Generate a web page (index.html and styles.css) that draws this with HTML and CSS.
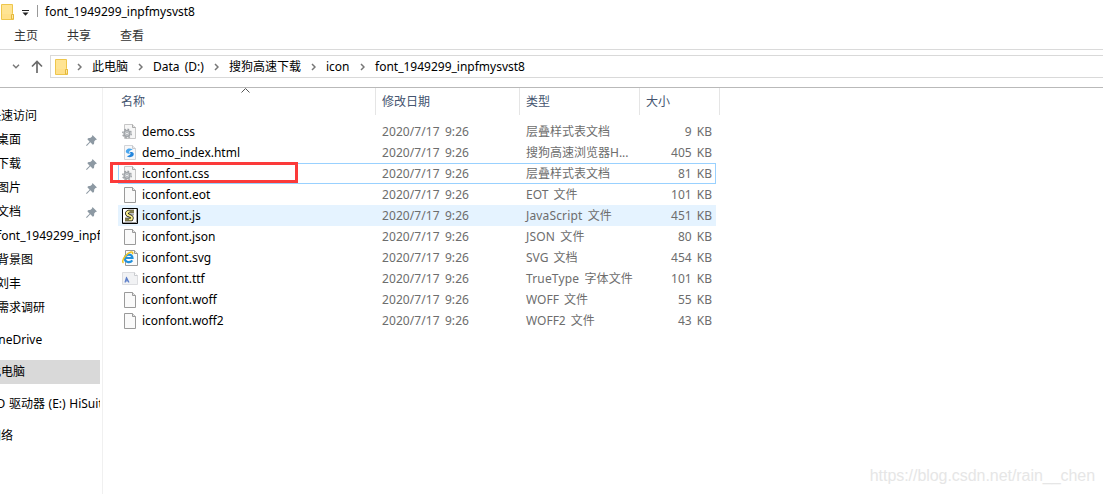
FILE: index.html
```
<!DOCTYPE html>
<html lang="zh-CN">
<head>
    <meta charset="UTF-8">
    <title>font_1949299_inpfmysvst8</title>
    <link rel="stylesheet" href="styles.css">
</head>
<body>
<svg class="sprite" width="0" height="0">
    <symbol id="folder" viewBox="0 0 13 16">
        <path d="M.5.5h11v9l1 1v5H.5z" fill="#ffe08a" stroke="#eec64c"/>
        <path d="M1 1h10v9H1z" fill="#ffe699" opacity=".6"/>
        <path d="M10.500 15v-4.500h2V15z" fill="#ffe9a2" stroke="#e5b93c"/>
    </symbol>
    <symbol id="arrow" viewBox="0 0 5 8"><path d="M1 1l3 3-3 3" fill="none" stroke="#777" stroke-width="1.500"/></symbol>
    <symbol id="pin" viewBox="0 0 11 11">
        <path d="M6.500 0L11 4.500 9.500 5 8.300 6.300 8 9 6.800 9.700 4.300 7.300.8 11 0 10.200 3.600 6.700 1.400 4.300 2 3.200l2.700-.4L6 1.500z" fill="#8d99a3"/>
    </symbol>
    <symbol id="page" viewBox="0 0 16 16">
        <path d="M2.500.5h8l3 3v12h-11z" fill="#fafafa" stroke="#9a9a9a"/>
        <path d="M10.500.5v3h3" fill="#e4e4e4" stroke="#9a9a9a"/>
    </symbol>
    <symbol id="css" viewBox="0 0 16 16">
        <path d="M2.500.5h8l3 3v11h-11z" fill="#f6f6f6" stroke="#c6c6c6"/>
        <path d="M10.500.5v3h3" fill="#e4e4e4" stroke="#aaa"/>
        <circle cx="5" cy="9.500" r="4.300" fill="none" stroke="#9b9fa3" stroke-width="1.300" stroke-dasharray="1.700 1.680"/>
        <circle cx="5" cy="9.500" r="2.900" fill="#d5d8db" stroke="#a2a6aa" stroke-width="1.500"/>
        <circle cx="5" cy="9.500" r="1.200" fill="#fff" stroke="#92979c" stroke-width=".6"/>
    </symbol>
    <symbol id="html" viewBox="0 0 16 16">
        <path d="M2.500.5h8l3 3v11h-11z" fill="#f7f8fa" stroke="#d2d4d8"/>
        <path d="M10.500.5v3h3" fill="#e8e8e8" stroke="#c6c8cc"/>
        <path d="M10.800 4.500C7 2 3 4.500 4 7.200c.6 1.500 2.600 1.200 4.300 1.600C6.500 7.200 6.500 5.600 10.800 4.500z" fill="#4aa6ee"/>
        <path d="M4.800 11.300c3.600 2.300 7.800 0 6.800-3-.6-1.700-2.600-1.200-4.200-1.600 1.800 1.600 1.700 3.400-2.600 4.600z" fill="#2385dc"/>
    </symbol>
    <symbol id="js" viewBox="0 0 16 16">
        <path d="M.5.5h15v15H.5z" fill="#fff" stroke="#000"/>
        <path d="M14.500 1v13.500H1" fill="none" stroke="#a0a0a0"/>
        <path d="M12 3.500H6.500C3.500 5 5 7 7 7.500c3 1 3.500 2 2.500 4H3" fill="none" stroke="#000" stroke-width="3.400" stroke-linejoin="round"/>
        <path d="M12 3.500H6.500C3.500 5 5 7 7 7.500c3 1 3.500 2 2.500 4H3" fill="none" stroke="#f7ec8c" stroke-width="2" stroke-linejoin="round"/>
        <path d="M7.500 3.500H12M8 6.800h4M3 11.500h4" stroke="#333" stroke-width=".6"/>
    </symbol>
    <symbol id="ie" viewBox="0 0 16 16">
        <path d="M3.500.5h9l3 3v12h-12z" fill="#fafafa" stroke="#999"/>
        <path d="M12.500.5v3h3" fill="#e4e4e4" stroke="#999"/>
        <path d="M10.300 10.300C8 13.500 2.500 12.300 2.800 8.100 3.100 3.800 10.300 3.200 10.500 8H3.500" fill="none" stroke="#2391dc" stroke-width="2.200"/>
        <path d="M1.500 13C-1.500 11 5 2.800 9 2c1.600-.3 2 .8 1.400 2.200" fill="none" stroke="#f1c31f" stroke-width="1.500"/>
    </symbol>
    <symbol id="ttf" viewBox="0 0 16 16">
        <path d="M.5 1.500h12l3 3v9H.5z" fill="#f1f2f4" stroke="#dcdde0"/>
        <path d="M12.500 1.500v3h3" fill="#fff" stroke="#c9cbce"/>
        <path d="M3 11.500l1.700-5.500M4.200 6L7 11.500M4 9.800h2" fill="none" stroke="#5d7fc9" stroke-width="1.200"/>
    </symbol>
</svg>

<div class="title-bar">
    <svg class="folder"><use href="#folder"/></svg>
    <svg class="quick" viewBox="0 0 7 6"><path d="M0 .5h7" stroke="#222"/><path d="M.5 2.500h6l-3 3.200z" fill="#222"/></svg>
    <span class="title-divider"></span>
    <span>font_1949299_inpfmysvst8</span>
</div>
<div class="menu">
    <span>主页</span><span>共享</span><span>查看</span>
</div>
<div class="address-row">
    <svg class="recent" viewBox="0 0 8 5"><path d="M1 .8l3 3 3-3" fill="none" stroke="#777" stroke-width="1.400"/></svg>
    <svg class="up" viewBox="0 0 12 13"><path d="M6 13V1.500M1 6.500l5-5 5 5" fill="none" stroke="#6b6b6b" stroke-width="1.700"/></svg>
    <div class="address">
        <svg class="folder"><use href="#folder"/></svg>
        <svg class="arrow"><use href="#arrow"/></svg>
        <span class="crumb-pc">此电脑</span>
        <svg class="arrow"><use href="#arrow"/></svg>
        <span class="crumb-drive">Data (D:)</span>
        <svg class="arrow"><use href="#arrow"/></svg>
        <span class="crumb-dl">搜狗高速下载</span>
        <svg class="arrow"><use href="#arrow"/></svg>
        <span class="crumb-icon">icon</span>
        <svg class="arrow"><use href="#arrow"/></svg>
        <span>font_1949299_inpfmysvst8</span>
    </div>
</div>

<div class="main">
    <div class="nav">
        <div class="nav-item root"><span>快速访问</span></div>
        <div class="nav-item"><span>桌面</span><svg class="pin"><use href="#pin"/></svg></div>
        <div class="nav-item"><span>下载</span><svg class="pin"><use href="#pin"/></svg></div>
        <div class="nav-item"><span>图片</span><svg class="pin"><use href="#pin"/></svg></div>
        <div class="nav-item"><span>文档</span><svg class="pin"><use href="#pin"/></svg></div>
        <div class="nav-item"><span>font_1949299_inpfmysvst8</span></div>
        <div class="nav-item"><span>背景图</span></div>
        <div class="nav-item"><span>刘丰</span></div>
        <div class="nav-item"><span>需求调研</span></div>
        <div class="nav-item root group"><span>OneDrive</span></div>
        <div class="nav-item root group selected"><span>此电脑</span></div>
        <div class="nav-item root group"><span>CD 驱动器 (E:) HiSuite</span></div>
        <div class="nav-item root group"><span>网络</span></div>
    </div>
    <div class="files">
        <div class="columns">
            <div class="col name">名称
                <svg class="sort" viewBox="0 0 9 5"><path d="M.5 4.500l4-4 4 4" fill="none" stroke="#555"/></svg>
            </div>
            <div class="col date">修改日期</div>
            <div class="col type">类型</div>
            <div class="col size">大小</div>
        </div>
        <div class="rows">
            <div class="row"><svg><use href="#css"/></svg><span class="file">demo.css</span><span class="time">2020/7/17 9:26</span><span class="kind">层叠样式表文档</span><span class="bytes">9 KB</span></div>
            <div class="row"><svg><use href="#html"/></svg><span class="file">demo_index.html</span><span class="time">2020/7/17 9:26</span><span class="kind">搜狗高速浏览器H...</span><span class="bytes">405 KB</span></div>
            <div class="row focused"><svg><use href="#css"/></svg><span class="file">iconfont.css</span><span class="time">2020/7/17 9:26</span><span class="kind">层叠样式表文档</span><span class="bytes">81 KB</span><span class="marker"></span></div>
            <div class="row"><svg><use href="#page"/></svg><span class="file">iconfont.eot</span><span class="time">2020/7/17 9:26</span><span class="kind">EOT 文件</span><span class="bytes">101 KB</span></div>
            <div class="row hovered"><svg><use href="#js"/></svg><span class="file">iconfont.js</span><span class="time">2020/7/17 9:26</span><span class="kind spaced">JavaScript 文件</span><span class="bytes">451 KB</span></div>
            <div class="row"><svg><use href="#page"/></svg><span class="file">iconfont.json</span><span class="time">2020/7/17 9:26</span><span class="kind spaced">JSON 文件</span><span class="bytes">80 KB</span></div>
            <div class="row"><svg><use href="#ie"/></svg><span class="file">iconfont.svg</span><span class="time">2020/7/17 9:26</span><span class="kind">SVG 文档</span><span class="bytes">454 KB</span></div>
            <div class="row"><svg><use href="#ttf"/></svg><span class="file">iconfont.ttf</span><span class="time">2020/7/17 9:26</span><span class="kind spaced">TrueType 字体文件</span><span class="bytes">101 KB</span></div>
            <div class="row"><svg><use href="#page"/></svg><span class="file">iconfont.woff</span><span class="time">2020/7/17 9:26</span><span class="kind">WOFF 文件</span><span class="bytes">55 KB</span></div>
            <div class="row"><svg><use href="#page"/></svg><span class="file">iconfont.woff2</span><span class="time">2020/7/17 9:26</span><span class="kind">WOFF2 文件</span><span class="bytes">43 KB</span></div>
        </div>
    </div>
</div>
<div class="watermark">https://blog.csdn.net/rain__chen</div>
</body>
</html>
```

FILE: styles.css
```
* {
    box-sizing: border-box;
}
body {
    margin: 0;
    width: 1103px;
    height: 494px;
    overflow: hidden;
    position: relative;
    background: #fff;
    color: #000;
    font-family: "Noto Sans", "Noto Sans CJK SC", sans-serif;
    font-size: 12px;
    line-height: 20px;
    word-spacing: 2px;
    white-space: nowrap;
}
svg {
    display: block;
    flex: none;
}
.sprite {
    position: absolute;
}
.folder {
    width: 13px;
    height: 16px;
}

/* title and menu */
.title-bar {
    display: flex;
    align-items: center;
    height: 24px;
    padding-left: 1px;
}
.quick {
    width: 7px;
    height: 6px;
    margin: 2px 0 0 8px;
}
.title-divider {
    width: 1px;
    height: 12px;
    margin: 0 7px 2px 8px;
    background: #999;
}
.menu {
    display: flex;
    align-items: center;
    gap: 29px;
    height: 26px;
    padding: 0 0 2px 14px;
    border-bottom: 1px solid #dadada;
    color: #333;
}

/* address bar */
.address-row {
    display: flex;
    align-items: center;
    height: 38px;
    padding: 0 0 5px 12px;
    border-bottom: 1px solid #b9b9b9;
}
.recent {
    width: 8px;
    height: 5px;
}
.up {
    width: 12px;
    height: 13px;
    margin: 1px 7px 0 11px;
}
.address {
    display: flex;
    align-items: center;
    flex: 1;
    height: 23px;
    margin-top: 1px;
    padding-left: 4px;
    border: 1px solid #d9d9d9;
    border-right: 0;
}
.arrow {
    width: 5px;
    height: 8px;
    margin: 0 10px 0 9px;
}
.crumb-pc {
    width: 37px;
}
.crumb-drive {
    width: 52px;
}
.crumb-dl {
    width: 73px;
}
.crumb-icon {
    width: 25px;
}

/* navigation pane */
.main {
    display: flex;
    height: 406px;
}
.nav {
    width: 103px;
    padding-top: 16px;
    border-right: 1px solid #f0f0f0;
    word-spacing: .5px;
}
.nav-item {
    display: flex;
    align-items: center;
    justify-content: space-between;
    width: 100px;
    height: 24px;
    padding-right: 3px;
    overflow: hidden;
}
.nav-item span {
    margin-left: -3px;
}
.nav-item.root span {
    margin-left: -11px;
}
.nav-item.group {
    margin-top: 8px;
}
.nav-item.selected {
    background: #d9d9d9;
}
.pin {
    width: 11px;
    height: 11px;
}

/* file list */
.files {
    flex: 1;
}
.columns {
    display: flex;
    height: 27px;
    color: #44546f;
}
.col {
    position: relative;
    padding: 4px 0 0 6px;
    border-right: 1px solid #e5e5e5;
}
.col.name {
    width: 273px;
    padding-left: 18px;
}
.col.date {
    width: 144px;
}
.col.type {
    width: 120px;
}
.col.size {
    width: 80px;
}
.sort {
    position: absolute;
    left: 138px;
    top: 0;
    width: 9px;
    height: 5px;
}
.rows {
    width: 613px;
    padding: 6px 0 0 15px;
}
.row {
    display: flex;
    align-items: center;
    position: relative;
    height: 21px;
    color: #6d6d6d;
}
.row svg {
    width: 16px;
    height: 16px;
    margin: 0 4px;
}
.row .file {
    width: 240px;
    color: #000;
}
.row .time {
    width: 144px;
    letter-spacing: .08px;
}
.row .kind {
    width: 110px;
}
.row .kind.spaced {
    letter-spacing: .15px;
}
.row .bytes {
    flex: 1;
    padding-right: 4px;
    text-align: right;
}
.row.hovered {
    background: #e5f3ff;
}
.row.focused {
    border: 1px solid #99d1ff;
}
.row.focused svg {
    margin-left: 3px;
}
.row.focused .bytes {
    padding-right: 3px;
}
.marker {
    position: absolute;
    left: -9px;
    top: -2px;
    width: 188px;
    height: 21px;
    border: 3px solid #fb3a3a;
}

.watermark {
    position: absolute;
    right: 8px;
    bottom: 8px;
    color: #e6e6e6;
    font-family: "Liberation Sans", Arial, sans-serif;
    font-size: 16px;
    letter-spacing: -.05px;
}
```
